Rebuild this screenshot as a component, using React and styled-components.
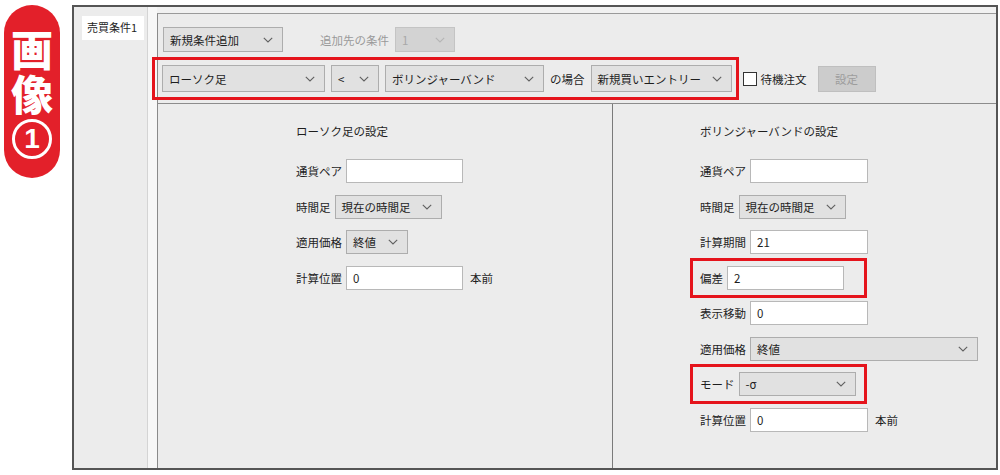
import React from "react";
import styled, { createGlobalStyle } from "styled-components";

const Global = createGlobalStyle`
  html, body { margin: 0; padding: 0; background: #ffffff; }
  body { font-family: "Noto Sans CJK JP", "Noto Sans", sans-serif; color: #1e1e1e; }
  * { box-sizing: border-box; }
`;

const Page = styled.div`
  display: flex;
  align-items: flex-start;
  width: 1000px;
  height: 475px;
  padding: 5px 2px 5px 4px;
`;

const Badge = styled.div`
  width: 56px;
  height: 173px;
  border-radius: 28px;
  background: #e3202a;
  color: #fff;
  display: flex;
  flex-direction: column;
  align-items: center;
  padding-top: 20px;
  flex-shrink: 0;
`;

const BadgeText = styled.div`
  font-family: "Noto Sans CJK JP", sans-serif;
  font-weight: 900;
  font-size: 42px;
  line-height: 45px;
  width: 46px;
  text-align: center;
  word-break: break-all;
`;

const BadgeCircle = styled.div`
  margin-top: 4px;
  width: 40px;
  height: 40px;
  border: 3px solid #fff;
  border-radius: 50%;
  display: flex;
  align-items: center;
  justify-content: center;
  font-family: "Liberation Sans", Arial, sans-serif;
  font-weight: 700;
  font-size: 28px;
  line-height: 1;
`;

const Window = styled.div`
  margin-left: 12px;
  width: 926px;
  height: 465px;
  border: 2px solid #555555;
  background: #f1f1f1;
  display: flex;
  flex-shrink: 0;
`;

const SideColumn = styled.div`
  width: 83px;
  flex-shrink: 0;
  background: linear-gradient(
    to right,
    #ececec 0 73px,
    #d4d4d4 73px 74px,
    #f7f7f7 74px
  );
`;

const Tab = styled.div`
  margin: 9px 0 0 8px;
  width: 62px;
  height: 24px;
  background: #ffffff;
  font-size: 11px;
  line-height: 22px;
  padding-left: 5px;
  white-space: nowrap;
`;

const Main = styled.div`
  flex: 1;
  margin-top: 6px;
  border-top: 1px solid #9a9a9a;
  border-left: 1px solid #8a8a8a;
  background: #ececec;
  display: flex;
  flex-direction: column;
  min-width: 0;
`;

const TopRow = styled.div`
  display: flex;
  align-items: center;
  margin-top: 13px;
  padding-left: 5px;
  height: 25px;
`;

const Text = styled.span`
  font-size: 11.5px;
  line-height: 16px;
  white-space: nowrap;
  color: ${(p) => (p.$muted ? "#9a9a9a" : "#1e1e1e")};
  margin-left: ${(p) => p.$ml || 0}px;
  margin-right: ${(p) => p.$mr || 0}px;
`;

const SelectBox = styled.div`
  display: flex;
  align-items: center;
  justify-content: space-between;
  width: ${(p) => p.$w}px;
  height: ${(p) => p.$h || 24}px;
  margin-left: ${(p) => p.$ml || 0}px;
  background: ${(p) => (p.$disabled ? "#d3d3d3" : "#e1e1e1")};
  border: 1px solid ${(p) => (p.$disabled ? "#c4c4c4" : "#adadad")};
  padding: 0 9px 0 6px;
  font-size: 11.5px;
  white-space: nowrap;
  color: ${(p) => (p.$disabled ? "#a8a8a8" : "#1e1e1e")};
  flex-shrink: 0;
`;

const Chevron = ({ light }) => (
  <svg width="10" height="6" viewBox="0 0 10 6">
    <path
      d="M0.8 0.8 L5 5 L9.2 0.8"
      fill="none"
      stroke={light ? "#b5b5b5" : "#606060"}
      strokeWidth="1.1"
    />
  </svg>
);

const Select = ({ w, h, ml, disabled, children }) => (
  <SelectBox $w={w} $h={h} $ml={ml} $disabled={disabled}>
    <span>{children}</span>
    <Chevron light={disabled} />
  </SelectBox>
);

const ConditionRow = styled.div`
  display: flex;
  align-items: center;
  margin-top: 5px;
  margin-left: -6px;
`;

const Highlight = styled.div`
  display: flex;
  align-items: center;
  border: 3px solid #e5141c;
  padding: 5px 4px 5px 7px;
  gap: 6px;
  flex-shrink: 0;
`;

const CheckBox = styled.div`
  width: 14px;
  height: 14px;
  margin-left: 4px;
  background: #fff;
  border: 1px solid #333;
  flex-shrink: 0;
`;

const Button = styled.div`
  margin-left: 11px;
  width: 58px;
  height: 26px;
  background: #cccccc;
  border: 1px solid #bfbfbf;
  color: #9d9d9d;
  font-size: 11.5px;
  display: flex;
  align-items: center;
  justify-content: center;
`;

const Panels = styled.div`
  flex: 1;
  display: flex;
  margin-top: 3px;
  border-top: 1px solid #8c8c8c;
`;

const Panel = styled.div`
  width: ${(p) => (p.$w ? `${p.$w}px` : "auto")};
  flex: ${(p) => (p.$w ? "0 0 auto" : "1")};
  border-left: ${(p) => (p.$border ? "1px solid #7a7a7a" : "none")};
  padding: 19px 0 0 ${(p) => p.$pl}px;
  display: flex;
  flex-direction: column;
`;

const Title = styled.div`
  font-size: 11.5px;
  line-height: 16px;
  margin-bottom: 20px;
  white-space: nowrap;
`;

const Row = styled.div`
  display: flex;
  align-items: center;
  height: 24px;
  & + & {
    margin-top: 11.5px;
  }
`;

const RowHighlight = styled.div`
  display: flex;
  align-items: center;
  width: 177px;
  margin: -8px 0 -8px -10px;
  padding: 5px 0 5px 7px;
  border: 3px solid #e5141c;
`;

const Label = styled.span`
  font-size: 11.5px;
  white-space: nowrap;
  margin-right: 4px;
`;

const Input = styled.div`
  width: ${(p) => p.$w || 117}px;
  height: 24px;
  background: #ffffff;
  border: 1px solid #b8b8b8;
  padding-left: 6px;
  font-size: 11.5px;
  line-height: 22px;
  flex-shrink: 0;
`;

const Suffix = styled.span`
  font-size: 11.5px;
  margin-left: 7px;
  white-space: nowrap;
`;

export default function App() {
  return (
    <>
      <Global />
      <Page>
        <Badge>
          <BadgeText>画像</BadgeText>
          <BadgeCircle>1</BadgeCircle>
        </Badge>
        <Window>
          <SideColumn>
            <Tab>売買条件1</Tab>
          </SideColumn>
          <Main>
            <TopRow>
              <Select w={120} h={25}>新規条件追加</Select>
              <Text $muted $ml={37}>追加先の条件</Text>
              <Select w={60} h={25} ml={6} disabled>1</Select>
            </TopRow>
            <ConditionRow>
              <Highlight>
                <Select w={163} h={27}>ローソク足</Select>
                <Select w={48} h={27}>&lt;</Select>
                <Select w={159} h={27}>ボリンジャーバンド</Select>
                <Text>の場合</Text>
                <Select w={141} h={27}>新規買いエントリー</Select>
              </Highlight>
              <CheckBox />
              <Text $ml={4}>待機注文</Text>
              <Button>設定</Button>
            </ConditionRow>
            <Panels>
              <Panel $w={454} $pl={138}>
                <Title>ローソク足の設定</Title>
                <Row>
                  <Label>通貨ペア</Label>
                  <Input />
                </Row>
                <Row>
                  <Label>時間足</Label>
                  <Select w={107}>現在の時間足</Select>
                </Row>
                <Row>
                  <Label>適用価格</Label>
                  <Select w={62}>終値</Select>
                </Row>
                <Row>
                  <Label>計算位置</Label>
                  <Input>0</Input>
                  <Suffix>本前</Suffix>
                </Row>
              </Panel>
              <Panel $border $pl={87}>
                <Title>ボリンジャーバンドの設定</Title>
                <Row>
                  <Label>通貨ペア</Label>
                  <Input $w={118} />
                </Row>
                <Row>
                  <Label>時間足</Label>
                  <Select w={107}>現在の時間足</Select>
                </Row>
                <Row>
                  <Label>計算期間</Label>
                  <Input $w={118}>21</Input>
                </Row>
                <Row>
                  <RowHighlight>
                    <Label>偏差</Label>
                    <Input>2</Input>
                  </RowHighlight>
                </Row>
                <Row>
                  <Label>表示移動</Label>
                  <Input $w={118}>0</Input>
                </Row>
                <Row>
                  <Label>適用価格</Label>
                  <Select w={228}>終値</Select>
                </Row>
                <Row>
                  <RowHighlight>
                    <Label>モード</Label>
                    <Select w={117}>-σ</Select>
                  </RowHighlight>
                </Row>
                <Row>
                  <Label>計算位置</Label>
                  <Input $w={118}>0</Input>
                  <Suffix>本前</Suffix>
                </Row>
              </Panel>
            </Panels>
          </Main>
        </Window>
      </Page>
    </>
  );
}
